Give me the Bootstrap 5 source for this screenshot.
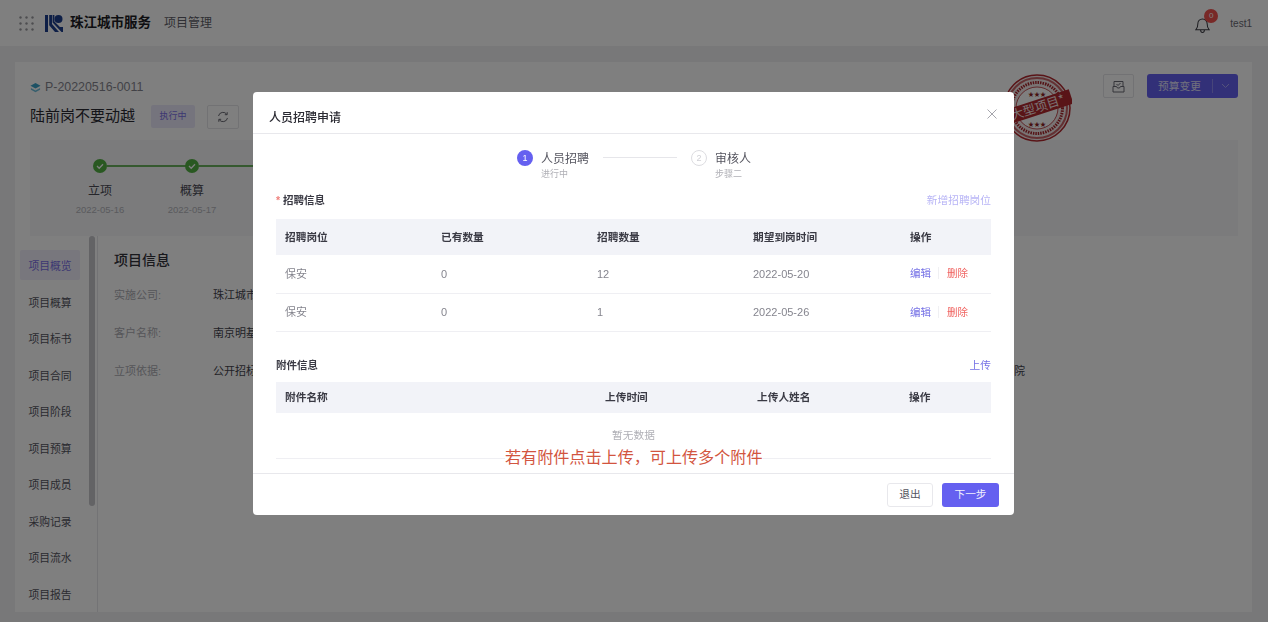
<!DOCTYPE html>
<html lang="zh-CN">
<head>
  <meta charset="UTF-8" />
  <meta name="viewport" content="width=device-width, initial-scale=1" />
  <title>人员招聘申请</title>
  <link href="https://cdn.jsdelivr.net/npm/bootstrap@5.3.0/dist/css/bootstrap.min.css" rel="stylesheet" />
  <style>
    html, body { height: 622px; overflow: hidden; }
    body { font-family: "Liberation Sans", "Noto Sans CJK SC", sans-serif; font-size: 11px; background: #f0f1f3; color: #2b2b33; }
    .top-bar { height: 46px; background: #fff; padding: 0 16px 0 19px; }
    .brand-name { font-size: 13.5px; font-weight: 700; color: #1c1c24; margin-left: 7px; }
    .brand-sub { font-size: 12px; color: #5f5f69; margin-left: 13px; }
    .bell-wrap { position: relative; width: 15px; height: 17px; margin-right: 20px; margin-top: 4px; }
    .bell-count { position: absolute; top: -8px; left: 9px; width: 14px; height: 14px; border-radius: 50%; background: #f0524f; color: #fff; font-size: 8px; line-height: 14px; text-align: center; }
    .user-name { font-size: 10px; color: #6a6a74; }
    .page-wrap { height: 576px; padding: 16px 16px 10px 15px; }
    .main-card { position: relative; height: 100%; background: #fff; padding: 17px 14px 0 15px; display: flex; flex-direction: column; }
    .proj-code { font-size: 12.4px; line-height: 16px; color: #85858e; }
    .proj-title { font-size: 15px; color: #2a2a32; }
    .status-tag { width: 44px; height: 23px; margin-left: 16px; background: #ebe9fb; color: #7a70e6; font-size: 9px; line-height: 23px; text-align: center; border-radius: 2px; }
    .refresh-btn { width: 32px; height: 24px; margin-left: 12px; border: 1px solid #e4e4e8; border-radius: 2px; }
    .head-row { margin-top: 10px; height: 23px; }
    .head-actions { position: absolute; top: 12px; right: 14px; gap: 13px; }
    .ghost-btn { width: 31px; height: 24px; border: 1px solid #e4e4e8; border-radius: 2px; }
    .budget-btn { width: 91px; height: 24px; background: #6560f0; border-radius: 3px; color: #e2e1fb; font-size: 10.7px; }
    .budget-btn span:first-child { width: 66px; text-align: center; border-right: 1px solid #8f8bf4; line-height: 14px; }
    .stamp-pos { position: absolute; left: 987px; top: 10px; }
    .step-panel { height: 96px; margin-top: 12px; background: #f6f7f9; }
    .flow-step { position: absolute; top: 19px; width: 80px; text-align: center; }
    .step-panel-inner { position: relative; height: 100%; }
    .flow-dot { display: block; width: 14px; height: 14px; margin: 0 auto; }
    .flow-name { font-size: 12px; color: #4a4a54; margin-top: 10px; line-height: 17px; }
    .flow-date { font-size: 9.500px; color: #b5b5bb; line-height: 11px; margin-top: 4px; }
    .flow-line { position: absolute; top: 25px; height: 1.500px; background: #6bb35f; }
    .lower-area { flex: 1; min-height: 0; margin-left: -10px; }
    .side-menu { width: 60px; padding-top: 14px; }
    .side-item { height: 30px; line-height: 32px; margin-bottom: 6.5px; text-align: center; font-size: 10.8px; color: #55555f; }
    .side-item.is-active { background: #f0eefb; color: #7a70e6; border-radius: 2px; }
    .side-rail { width: 8px; margin-left: 9px; }
    .side-thumb { width: 6px; height: 270px; background: #c6c6cb; border-radius: 3px; }
    .info-pane { flex: 1; border-left: 1px solid #e6e6ea; padding: 14px 0 0 16px; }
    .info-title { font-size: 14px; font-weight: 500; color: #33333b; line-height: 20px; margin-bottom: 17px; }
    .info-row { height: 38px; line-height: 16px; }
    .info-label { width: 99px; color: #acacb3; }
    .info-value { width: 812px; color: #44444e; }
    .modal.rec-modal { display: block; }
    .rec-modal .modal-dialog { max-width: 761px; width: 761px; margin: 92px 0 0 253px; }
    .rec-modal .modal-content { height: 423px; border: 0; border-radius: 4px; position: relative; }
    .rec-modal .modal-header { height: 42px; padding: 8px 16px 0 16px; border-bottom: 1px solid #e8e8ec; border-radius: 4px 4px 0 0; }
    .rec-modal .modal-title { font-size: 12px; font-weight: 500; color: #2a2a32; padding-top: 2px; }
    .close-x { width: 10px; height: 10px; margin-top: -6px; margin-right: 1px; }
    .rec-modal .modal-body { padding: 16px 23px 0 23px; overflow: hidden; height: 339px; flex: none; }
    .rec-modal .modal-footer { height: 42px; padding: 0 15px 0 0; border-top: 1px solid #e8e8ec; gap: 9px; flex-wrap: nowrap; }
    .rec-modal .modal-footer > * { margin: 0; }
    .wiz-steps { height: 33px; margin-left: 241px; }
    .wiz-num { width: 16px; height: 16px; border-radius: 50%; font-size: 9px; line-height: 16px; text-align: center; background: #6560f0; color: #fff; }
    .wiz-num.is-next { background: #fff; color: #d0d0d5; border: 1px solid #dcdce0; line-height: 14px; }
    .wiz-label { font-size: 12px; line-height: 16px; color: #55555f; margin-left: 8px; margin-top: 1px; }
    .wiz-sub { font-size: 9px; line-height: 11px; color: #b0b0b6; margin-left: 8px; margin-top: 2px; }
    .wiz-line { width: 74px; height: 1px; background: #e6e6ea; margin: 7px 14px 0; }
    .sec-head { height: 16px; line-height: 16px; margin-top: 9px; margin-bottom: 11px; }
    .sec-title { font-size: 10.5px; font-weight: 700; color: #3a3a44; }
    .req-mark { color: #f0807c; margin-right: 3px; }
    .sec-link { font-size: 10.7px; color: #7571e6; }
    .sec-link.is-faded { color: #b8b5f6; }
    .form-table { table-layout: fixed; width: 715px; margin-bottom: 0; font-size: 11px; }
    .form-table th { background: #f2f3f8; color: #3a3a44; font-weight: 700; font-size: 10.7px; padding: 0 0 0 9px; height: 36px; vertical-align: middle; border-bottom: 0; }
    .form-table td { color: #85858e; padding: 0 0 0 9px; height: 38px; vertical-align: middle; border-bottom: 1px solid #efeff3; }
    .files-table th { height: 31px; }
    .files-table td { height: 46px; text-align: center; font-size: 10.7px; color: #b0b0b6; padding: 0; }
    .act-edit { color: #7571e6; font-size: 10.5px; }
    .act-del { color: #f0625f; font-size: 10.5px; margin-left: 7px; padding-left: 8px; border-left: 1px solid #f0f0f3; }
    .sec-gap { margin-top: 25px; margin-bottom: 9px; }
    .red-note { position: absolute; left: 252px; top: 355px; font-size: 16.1px; line-height: 20px; color: #d2553f; background: #fff; white-space: nowrap; }
    .btn-quit { width: 46px; height: 24px; padding: 0; font-size: 10.7px; color: #55555f; border: 1px solid #e8e8ec; border-radius: 3px; background: #fff; }
    .btn-next { width: 57px; height: 24px; padding: 0; font-size: 10.7px; color: #f0f0fe; border: 0; border-radius: 3px; background: #6560f0; }
  </style>
</head>
<body>

  <!-- Top bar -->
  <header class="top-bar d-flex align-items-center justify-content-between">
    <div class="d-flex align-items-center">
      <svg width="15" height="15" viewBox="0 0 15 15" fill="#9b9ba1"><circle cx="1.5" cy="1.5" r="1.2"/><circle cx="7.5" cy="1.5" r="1.2"/><circle cx="13.5" cy="1.5" r="1.2"/><circle cx="1.5" cy="7.5" r="1.2"/><circle cx="7.5" cy="7.5" r="1.2"/><circle cx="13.5" cy="7.5" r="1.2"/><circle cx="1.5" cy="13.5" r="1.2"/><circle cx="7.5" cy="13.5" r="1.2"/><circle cx="13.5" cy="13.5" r="1.2"/></svg>
      <svg style="margin-left:11px" width="18" height="18" viewBox="0 0 18 18" fill="#1d3f8f"><path d="M0 1h3v17H0zM4.200 1h2.800v9l7 8h-4l-5.800-6.700zM7.600 1h1.800v6.500l5.500 5.500h3.100v5h-1.500l-8.900-9.500z"/><circle cx="13.500" cy="5" r="4"/></svg>
      <span class="brand-name">珠江城市服务</span>
      <span class="brand-sub">项目管理</span>
    </div>
    <div class="d-flex align-items-center">
      <div class="bell-wrap">
        <svg class="d-block" width="15" height="17" viewBox="0 0 16 18" fill="none" stroke="#3a3a42" stroke-width="1.100"><path d="M1 13.500c1.500-1.500 2-3 2-6 0-3 2-5.500 5-5.500s5 2.500 5 5.500c0 3 .5 4.500 2 6z"/><path d="M6 13.800c0 1.700 1 2.700 2 2.700s2-1 2-2.700"/></svg>
        <span class="bell-count">0</span>
      </div>
      <span class="user-name">test1</span>
    </div>
  </header>

  <div class="page-wrap">
    <div class="main-card">
      <div class="proj-code d-flex align-items-center gap-1">
        <svg width="11" height="11" viewBox="0 0 12 12"><path d="M6 1l5.500 3L6 7 .5 4z" fill="#3aa3c9"/><path d="M1 6.500L6 9.300l5-2.800v2L6 11.300 1 8.500z" fill="#6fbfdc"/></svg>
        P-20220516-0011
      </div>
      <div class="head-row d-flex align-items-center">
        <span class="proj-title">陆前岗不要动越</span>
        <span class="status-tag">执行中</span>
        <span class="refresh-btn d-flex align-items-center justify-content-center">
          <svg width="12" height="12" viewBox="0 0 12 12" fill="none" stroke="#6a6a74" stroke-width="1"><path d="M1.500 5a4.600 4.600 0 0 1 8.400-1.500M10.500 7a4.600 4.600 0 0 1-8.400 1.500"/><path d="M10.200 1.200v2.500H7.800M1.800 10.800V8.300h2.400"/></svg>
        </span>
      </div>

      <div class="head-actions d-flex">
        <span class="ghost-btn d-flex align-items-center justify-content-center">
          <svg width="13" height="13" viewBox="0 0 13 13" fill="none" stroke="#6a6a74" stroke-width="1"><path d="M2 6V1.500h9V6M1 6.500h3.500l1 1.500h2l1-1.500H12V12H1z"/><path d="M4.500 4l1.500 1.500L8.500 3"/></svg>
        </span>
        <span class="budget-btn d-flex align-items-center">
          <span>预算变更</span>
          <span class="flex-fill d-flex justify-content-center"><svg width="9" height="6" viewBox="0 0 9 6" fill="none" stroke="#a9a6f8" stroke-width="1"><path d="M1 1l3.500 3.500L8 1"/></svg></span>
        </span>
      </div>

      <svg class="stamp-pos" width="70" height="72" viewBox="0 0 70 72">
        <circle cx="35" cy="36" r="33" fill="#f3e9e9" stroke="#b3282e" stroke-width="1.500"/>
        <circle cx="35" cy="36" r="30" fill="none" stroke="#b3282e" stroke-opacity=".7" stroke-width="2"/>
        <circle cx="35" cy="36" r="25.500" fill="none" stroke="#a8242a" stroke-width="3" stroke-dasharray="1.500 1"/>
        <circle cx="35" cy="36" r="21" fill="#fff" stroke="#b3282e" stroke-opacity=".8" stroke-width="1"/>
        <text x="35" y="24" text-anchor="middle" font-size="6" fill="#8f1f24">★★★</text>
        <text x="35" y="54" text-anchor="middle" font-size="6" fill="#8f1f24">★★★</text>
        <g transform="rotate(-18 35 36)">
          <rect x="-1" y="28" width="72" height="15" fill="#b3282e"/>
          <text x="36" y="40" text-anchor="middle" font-size="12.500" fill="#f5e4e4" font-family="Noto Sans CJK SC">大型项目*</text>
        </g>
      </svg>

      <div class="step-panel">
        <div class="step-panel-inner">
          <span class="flow-line" style="left:77px;width:80px"></span>
          <span class="flow-line" style="left:169px;width:70px"></span>
          <div class="flow-step" style="left:30px">
            <svg class="flow-dot" viewBox="0 0 14 14"><circle cx="7" cy="7" r="7" fill="#52b043"/><path d="M4 7l2.200 2.200L10 5.200" fill="none" stroke="#fff" stroke-width="1.300"/></svg>
            <div class="flow-name">立项</div>
            <div class="flow-date">2022-05-16</div>
          </div>
          <div class="flow-step" style="left:122px">
            <svg class="flow-dot" viewBox="0 0 14 14"><circle cx="7" cy="7" r="7" fill="#52b043"/><path d="M4 7l2.200 2.200L10 5.200" fill="none" stroke="#fff" stroke-width="1.300"/></svg>
            <div class="flow-name">概算</div>
            <div class="flow-date">2022-05-17</div>
          </div>
        </div>
      </div>

      <div class="lower-area d-flex">
        <nav class="side-menu">
          <div class="side-item is-active">项目概览</div>
          <div class="side-item">项目概算</div>
          <div class="side-item">项目标书</div>
          <div class="side-item">项目合同</div>
          <div class="side-item">项目阶段</div>
          <div class="side-item">项目预算</div>
          <div class="side-item">项目成员</div>
          <div class="side-item">采购记录</div>
          <div class="side-item">项目流水</div>
          <div class="side-item">项目报告</div>
        </nav>
        <div class="side-rail"><div class="side-thumb"></div></div>
        <section class="info-pane">
          <div class="info-title">项目信息</div>
          <div class="info-row d-flex"><span class="info-label">实施公司:</span><span class="info-value">珠江城市服务有限公司</span></div>
          <div class="info-row d-flex"><span class="info-label">客户名称:</span><span class="info-value">南京明基医院有限公司</span></div>
          <div class="info-row d-flex"><span class="info-label">立项依据:</span><span class="info-value d-flex justify-content-between"><span>公开招标</span><span>院</span></span></div>
        </section>
      </div>
    </div>
  </div>

  <!-- Modal -->
  <div class="modal-backdrop fade show"></div>
  <div class="modal rec-modal">
    <div class="modal-dialog">
      <div class="modal-content">
        <div class="modal-header">
          <h5 class="modal-title">人员招聘申请</h5>
          <svg class="close-x" viewBox="0 0 10 10" stroke="#a5a5ac" stroke-width="1"><path d="M.5.500l9 9M9.500.500l-9 9"/></svg>
        </div>
        <div class="modal-body">
          <div class="wiz-steps d-flex">
            <span class="wiz-num">1</span>
            <div><div class="wiz-label">人员招聘</div><div class="wiz-sub">进行中</div></div>
            <span class="wiz-line"></span>
            <span class="wiz-num is-next">2</span>
            <div><div class="wiz-label">审核人</div><div class="wiz-sub">步骤二</div></div>
          </div>

          <div class="sec-head d-flex justify-content-between">
            <span class="sec-title"><span class="req-mark">*</span>招聘信息</span>
            <span class="sec-link is-faded">新增招聘岗位</span>
          </div>
          <table class="table form-table">
            <colgroup><col style="width:156px"><col style="width:156px"><col style="width:156px"><col style="width:157px"><col></colgroup>
            <thead><tr><th>招聘岗位</th><th>已有数量</th><th>招聘数量</th><th>期望到岗时间</th><th>操作</th></tr></thead>
            <tbody>
              <tr><td>保安</td><td>0</td><td>12</td><td>2022-05-20</td><td><span class="act-edit">编辑</span><span class="act-del">删除</span></td></tr>
              <tr><td>保安</td><td>0</td><td>1</td><td>2022-05-26</td><td><span class="act-edit">编辑</span><span class="act-del">删除</span></td></tr>
            </tbody>
          </table>

          <div class="sec-head sec-gap d-flex justify-content-between">
            <span class="sec-title">附件信息</span>
            <span class="sec-link">上传</span>
          </div>
          <table class="table form-table files-table">
            <colgroup><col style="width:320px"><col style="width:152px"><col style="width:152px"><col></colgroup>
            <thead><tr><th>附件名称</th><th>上传时间</th><th>上传人姓名</th><th>操作</th></tr></thead>
            <tbody><tr><td colspan="4">暂无数据</td></tr></tbody>
          </table>
        </div>
        <div class="modal-footer">
          <button type="button" class="btn btn-quit">退出</button>
          <button type="button" class="btn btn-next">下一步</button>
        </div>
        <div class="red-note">若有附件点击上传，可上传多个附件</div>
      </div>
    </div>
  </div>

  <script src="https://cdn.jsdelivr.net/npm/bootstrap@5.3.0/dist/js/bootstrap.bundle.min.js"></script>
</body>
</html>
